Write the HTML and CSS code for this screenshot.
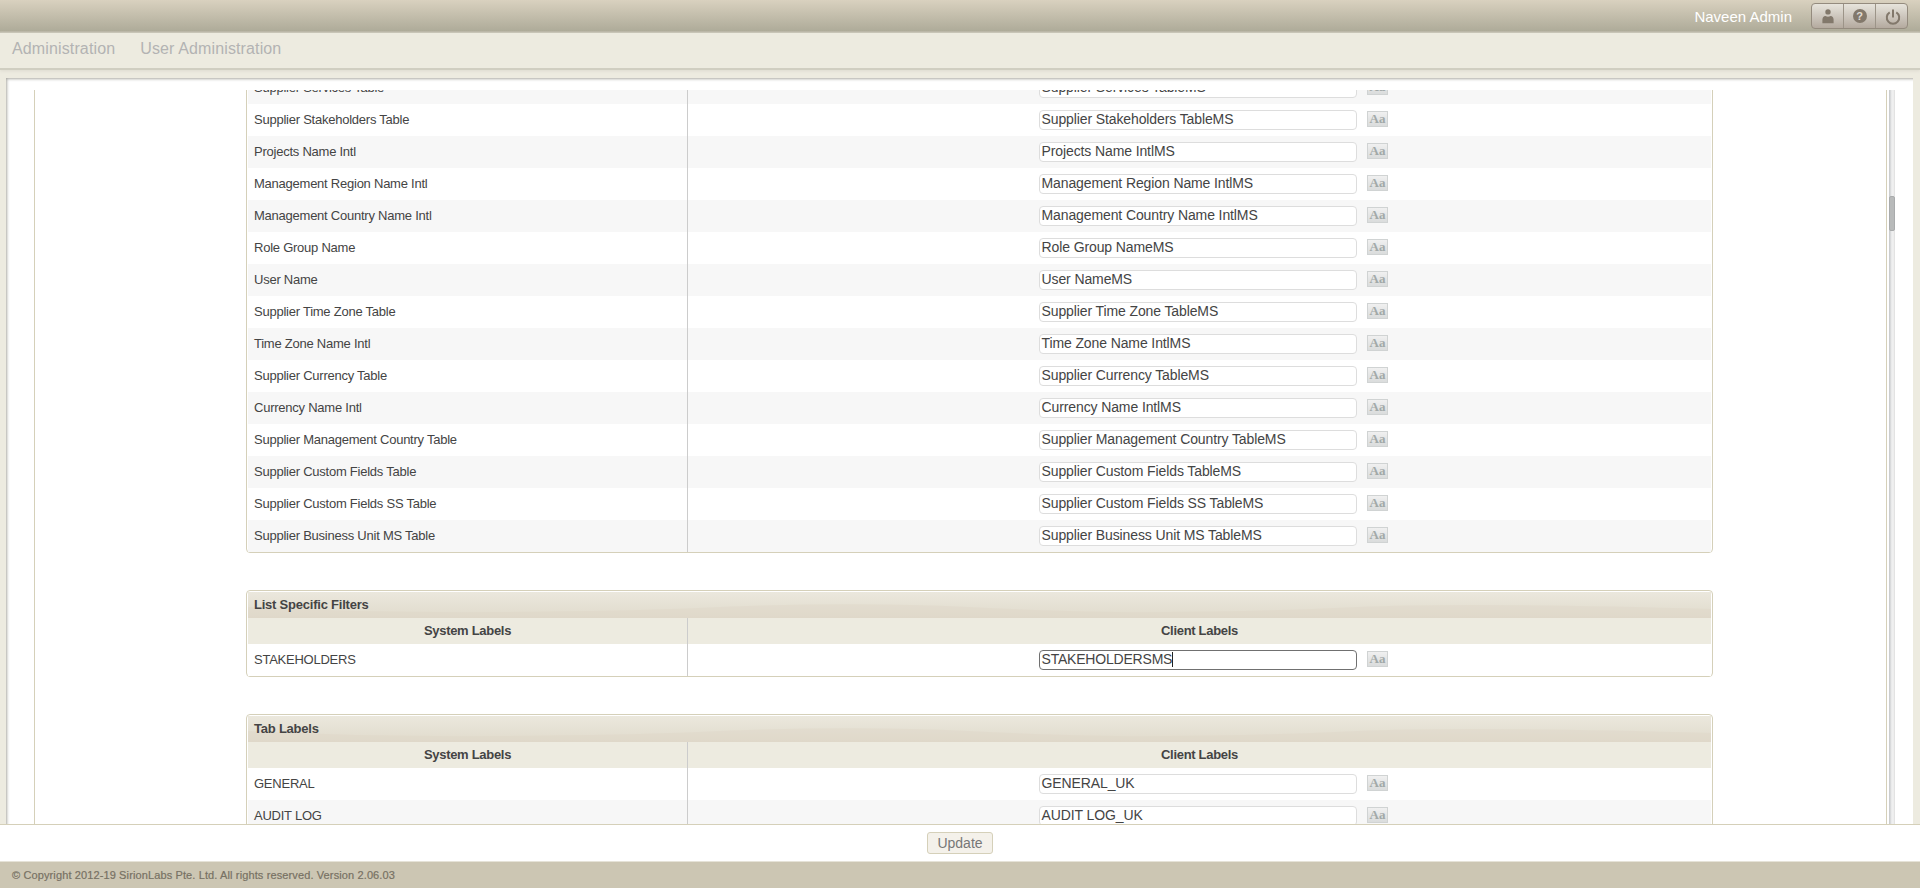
FILE: index.html
```html
<!DOCTYPE html>
<html lang="en">
<head>
<meta charset="utf-8">
<title>User Administration</title>
<link rel="stylesheet" href="styles.css">
</head>
<body>
<header class="topbar">
  <span class="user">Naveen Admin</span>
  <div class="tools">
    <a class="tool"><svg width="12" height="15" viewBox="0 0 12 15"><circle cx="6" cy="2.900" r="2.700"/><path d="M.4 14.300V10.500Q.7 7.300 3.400 7q2.600 1.500 5.200 0 2.700.3 3 3.500v3.800z"/></svg></a>
    <a class="tool"><span class="help">?</span></a>
    <a class="tool power"><svg width="16" height="16" viewBox="0 0 16 16"><path class="stroke" d="M4.700 3.300a6.200 6.200 0 1 0 6.600 0"/><path class="stroke" d="M8 .5v8"/></svg></a>
  </div>
</header>
<nav class="nav"><a>Administration</a><a>User Administration</a></nav>
<main class="main">
  <div class="panel">
    <div class="scroller">
      <div class="content">
        <section class="table first">
          <div class="row alt"><div class="sys">Supplier Services Table</div><div class="cli"><span class="input">Supplier Services TableMS</span><span class="aa">Aa</span></div></div>
          <div class="row"><div class="sys">Supplier Stakeholders Table</div><div class="cli"><span class="input">Supplier Stakeholders TableMS</span><span class="aa">Aa</span></div></div>
          <div class="row alt"><div class="sys">Projects Name Intl</div><div class="cli"><span class="input">Projects Name IntlMS</span><span class="aa">Aa</span></div></div>
          <div class="row"><div class="sys">Management Region Name Intl</div><div class="cli"><span class="input">Management Region Name IntlMS</span><span class="aa">Aa</span></div></div>
          <div class="row alt"><div class="sys">Management Country Name Intl</div><div class="cli"><span class="input">Management Country Name IntlMS</span><span class="aa">Aa</span></div></div>
          <div class="row"><div class="sys">Role Group Name</div><div class="cli"><span class="input">Role Group NameMS</span><span class="aa">Aa</span></div></div>
          <div class="row alt"><div class="sys">User Name</div><div class="cli"><span class="input">User NameMS</span><span class="aa">Aa</span></div></div>
          <div class="row"><div class="sys">Supplier Time Zone Table</div><div class="cli"><span class="input">Supplier Time Zone TableMS</span><span class="aa">Aa</span></div></div>
          <div class="row alt"><div class="sys">Time Zone Name Intl</div><div class="cli"><span class="input">Time Zone Name IntlMS</span><span class="aa">Aa</span></div></div>
          <div class="row"><div class="sys">Supplier Currency Table</div><div class="cli"><span class="input">Supplier Currency TableMS</span><span class="aa">Aa</span></div></div>
          <div class="row alt"><div class="sys">Currency Name Intl</div><div class="cli"><span class="input">Currency Name IntlMS</span><span class="aa">Aa</span></div></div>
          <div class="row"><div class="sys">Supplier Management Country Table</div><div class="cli"><span class="input">Supplier Management Country TableMS</span><span class="aa">Aa</span></div></div>
          <div class="row alt"><div class="sys">Supplier Custom Fields Table</div><div class="cli"><span class="input">Supplier Custom Fields TableMS</span><span class="aa">Aa</span></div></div>
          <div class="row"><div class="sys">Supplier Custom Fields SS Table</div><div class="cli"><span class="input">Supplier Custom Fields SS TableMS</span><span class="aa">Aa</span></div></div>
          <div class="row alt"><div class="sys">Supplier Business Unit MS Table</div><div class="cli"><span class="input">Supplier Business Unit MS TableMS</span><span class="aa">Aa</span></div></div>
        </section>
        <section class="table">
          <h2 class="title"><svg class="wave" viewBox="0 0 1463 26" preserveAspectRatio="none"><path d="M0 15Q120 21 250 20T450 16Q600 9 720 15T920 20Q1000 20 1110 15T1463 17V26H0z"/></svg><span>List Specific Filters</span></h2>
          <div class="row head"><div class="sys">System Labels</div><div class="cli">Client Labels</div></div>
          <div class="row"><div class="sys">STAKEHOLDERS</div><div class="cli"><span class="input focused">STAKEHOLDERSMS<i class="caret"></i></span><span class="aa">Aa</span></div></div>
        </section>
        <section class="table">
          <h2 class="title"><svg class="wave" viewBox="0 0 1463 26" preserveAspectRatio="none"><path d="M0 15Q120 21 250 20T450 16Q600 9 720 15T920 20Q1000 20 1110 15T1463 17V26H0z"/></svg><span>Tab Labels</span></h2>
          <div class="row head"><div class="sys">System Labels</div><div class="cli">Client Labels</div></div>
          <div class="row"><div class="sys">GENERAL</div><div class="cli"><span class="input">GENERAL_UK</span><span class="aa">Aa</span></div></div>
          <div class="row alt"><div class="sys">AUDIT LOG</div><div class="cli"><span class="input">AUDIT LOG_UK</span><span class="aa">Aa</span></div></div>
        </section>
      </div>
      <div class="track"><div class="thumb"></div></div>
    </div>
  </div>
</main>
<div class="actions"><button class="update">Update</button></div>
<footer class="footer">© Copyright 2012-19 SirionLabs Pte. Ltd. All rights reserved. Version 2.06.03</footer>
</body>
</html>
```
FILE: styles.css
```css
* { box-sizing: border-box; }
body {
  margin: 0;
  height: 888px;
  overflow: hidden;
  display: flex;
  flex-direction: column;
  background: #edebe0;
  color: #444;
  font-family: "Liberation Sans", Arial, sans-serif;
}
.topbar {
  height: 33px;
  flex: none;
  display: flex;
  justify-content: flex-end;
  padding: 3px 12px 0 0;
  background: linear-gradient(#d9d1bf, #aeab99 31px, #c4c1b3 32px);
}
.user { color: #fff; font-size: 15px; line-height: 27px; margin-right: 19px; }
.tools {
  display: grid;
  grid-template-columns: 31px 32px 32px;
  width: 97px;
  height: 26px;
  border: 1px solid #948b7e;
  border-radius: 4px;
  background: linear-gradient(#e7e4dc, #b4aa9f);
}
.tool { display: flex; align-items: center; justify-content: center; fill: #82786b; }
.tool + .tool { border-left: 1px solid #9c9488; }
.power { padding: 2px 0 0 2px; }
.stroke { fill: none; stroke: #82786b; stroke-width: 2; }
.help {
  width: 14px;
  height: 14px;
  border-radius: 50%;
  background: #82786b;
  color: #e0dcd4;
  font-size: 11px;
  font-weight: bold;
  line-height: 14px;
  text-align: center;
}
.nav {
  height: 37px;
  flex: none;
  display: flex;
  gap: 25px;
  padding-left: 12px;
  border-bottom: 2px solid #d0cec1;
  box-shadow: 0 1px 3px #dddbd0;
  font-size: 16px;
  line-height: 31px;
  letter-spacing: .13px;
  color: #b3b3b3;
}
.main { height: 754px; flex: none; padding: 8px 7px 0 6px; }
.panel {
  height: 746px;
  padding: 12px 0 0 28px;
  background: #fff;
  box-shadow: inset 3px 3px 3px -2px #aaa9a3;
}
.scroller { height: 734px; display: flex; overflow: hidden; }
.content {
  width: 1853px;
  flex: none;
  border: solid #d5d0b9;
  border-width: 0 1px;
  padding-left: 211px;
}
.track {
  width: 6px;
  margin-left: 2px;
  padding-top: 106px;
  background: linear-gradient(90deg, #cbcdcf 0 1px, #e6e7e8 2px, #f3f3f3 4px, #dedede);
}
.thumb {
  height: 35px;
  border-radius: 2px;
  border: 1px solid #a9abac;
  background: #b8baba;
}
.table {
  width: 1467px;
  margin-bottom: 37px;
  padding: 1px 1px 0;
  border: 1px solid #d5d0b9;
  border-radius: 4px;
}
.first { margin-top: -20px; }
.title {
  height: 26px;
  margin: 0;
  position: relative;
  background: linear-gradient(#ebe8dd, #e0dbcc);
  font-size: 13px;
  line-height: 26px;
  letter-spacing: -.22px;
}
.title span { position: relative; padding-left: 6px; }
.wave { position: absolute; inset: 0; width: 100%; height: 100%; fill: #dfd6c7; opacity: .4; }
.row { height: 32px; display: flex; background: #fff; }
.alt { background: #f7f7f7; }
.head { height: 26px; background: #edebe0; }
.sys {
  width: 440px;
  flex: none;
  padding-left: 6px;
  border-right: 1px solid #ccc;
  font-size: 13px;
  line-height: 31px;
  letter-spacing: -.24px;
}
.cli { flex: 1; display: flex; align-items: flex-start; padding: 6px 0 0 351px; }
.head .sys, .head .cli {
  padding: 0;
  font-size: 13px;
  font-weight: bold;
  line-height: 25px;
  letter-spacing: -.3px;
  text-align: center;
  display: block;
}
.input {
  width: 318px;
  height: 20px;
  padding-left: 1.5px;
  border: 1px solid #ddd;
  border-radius: 4px;
  background: #fff;
  font-size: 14px;
  line-height: 17px;
  letter-spacing: -.11px;
  white-space: nowrap;
}
.focused { border-color: #707070; letter-spacing: -.2px; }
.caret { display: inline-block; width: 1px; height: 15px; background: #222; vertical-align: -3px; }
.aa {
  width: 21px;
  height: 16px;
  margin: 1px 0 0 10px;
  border: 1px solid #d0d3d3;
  background: linear-gradient(#f0f0f0, #dadcdc);
  color: #a2a9a8;
  font: bold 13px/14px "Liberation Serif", serif;
  text-align: center;
}
.actions {
  height: 38px;
  flex: none;
  display: flex;
  justify-content: center;
  padding-top: 7px;
  background: #fff;
  border-top: 1px solid #d5d0b9;
  border-bottom: 1px solid #e6e3d8;
}
.update {
  width: 66px;
  height: 22px;
  padding: 0;
  border: 1px solid #d5d0b9;
  border-radius: 3px;
  background: #f4f1ea;
  color: #777;
  font: 14px/18px "Liberation Sans", Arial, sans-serif;
}
.footer {
  height: 26px;
  flex: none;
  padding-left: 12px;
  background: #ccc6b3;
  color: #777163;
  font-size: 11px;
  letter-spacing: .12px;
  line-height: 26px;
  -webkit-text-stroke: .2px #777163;
}
```
